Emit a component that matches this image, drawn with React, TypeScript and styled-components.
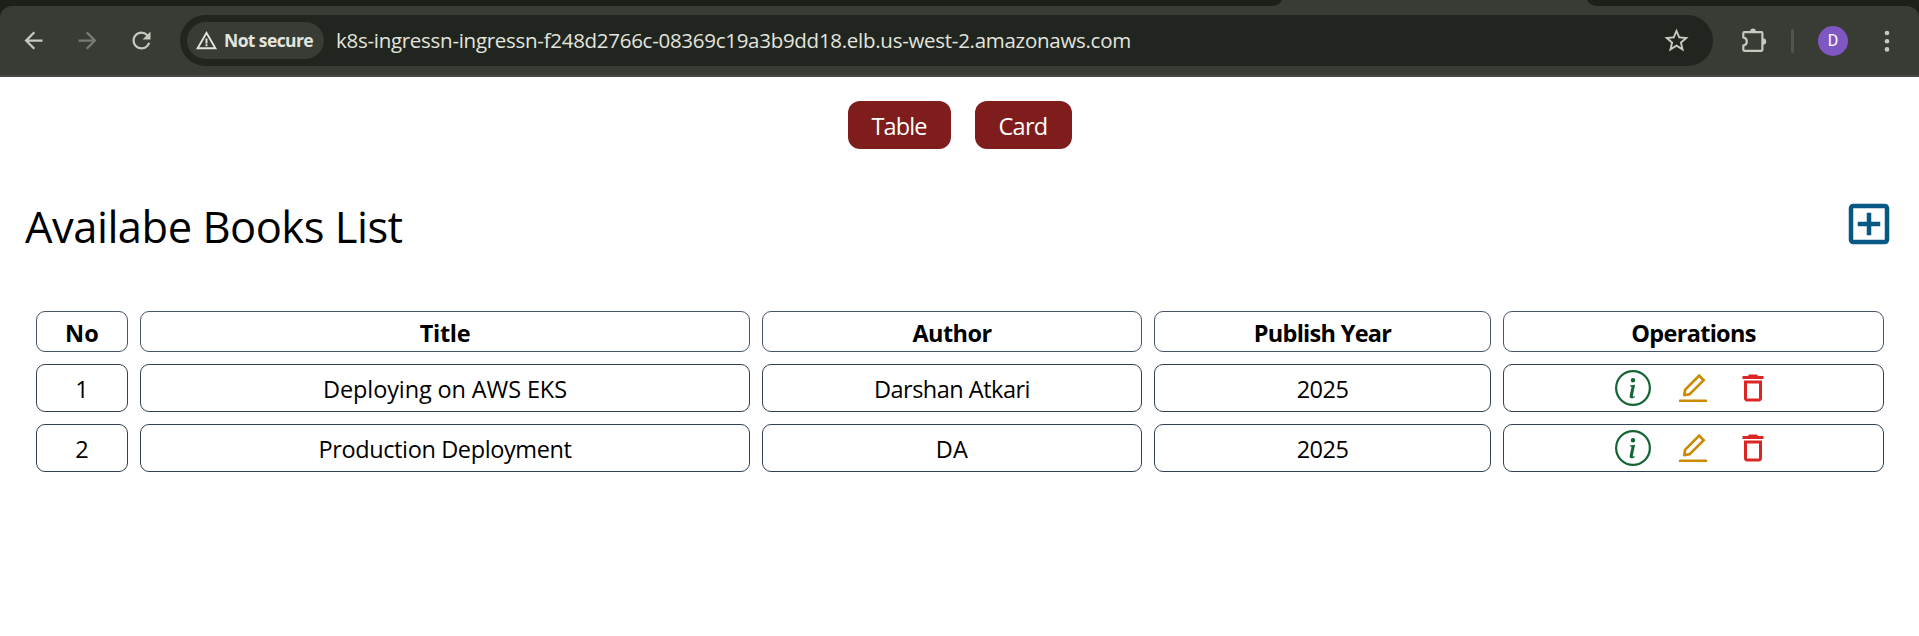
import React from "react";
import styled, { createGlobalStyle } from "styled-components";
import { BsInfoCircle } from "react-icons/bs";
import { AiOutlineEdit } from "react-icons/ai";
import {
  MdArrowBack,
  MdArrowForward,
  MdOutlineAddBox,
  MdOutlineDelete,
  MdRefresh,
  MdStarBorder,
  MdWarningAmber,
} from "react-icons/md";

const GlobalStyle = createGlobalStyle`
  *, *::before, *::after { box-sizing: border-box; }
  body {
    margin: 0;
    background: #ffffff;
    color: #000000;
    font-family: "Segoe UI", "Open Sans", "Noto Sans", sans-serif;
  }
  svg { display: block; flex: none; }
`;

/* ---------- browser chrome ---------- */

const TabStrip = styled.div`
  display: flex;
  height: 6px;
  padding-left: 1270px;
  background: #1c201b;
`;

const ToolbarFrame = styled.div`
  background: #1c201b;
`;

const Toolbar = styled.header`
  display: flex;
  align-items: center;
  height: 71px;
  padding: 0 0 0 6px;
  border-bottom: 2px solid #454843;
  border-radius: 12px 12px 0 0;
  background: #383c35;
  color: #c5cabf;
`;

const ToolButton = styled.span<{ $dim?: boolean }>`
  display: flex;
  align-items: center;
  justify-content: center;
  width: 54px;
  height: 51px;
  color: ${(p) => (p.$dim ? "#777b73" : "#c5cabf")};
`;

const AddressBar = styled.div`
  display: flex;
  align-items: center;
  width: 1533px;
  height: 51px;
  margin: 0 14px 0 12px;
  padding: 0 22px 0 7px;
  border-radius: 26px;
  background: #212520;
`;

const SecurityChip = styled.div`
  display: flex;
  align-items: center;
  gap: 6px;
  width: 137px;
  height: 37px;
  padding: 0 0 1px 8px;
  border-radius: 19px;
  background: #383c35;
  color: #e2e4dd;
  font-size: 17.5px;
  font-weight: 700;
  letter-spacing: -0.6px;
  white-space: nowrap;
`;

const Url = styled.span`
  flex: 1;
  padding: 0 0 2px 12px;
  color: #e2e4dd;
  font-size: 20.5px;
  letter-spacing: -0.28px;
  white-space: nowrap;
`;

const Separator = styled.span`
  width: 3px;
  height: 24px;
  margin: 0 24px 0 10px;
  border-radius: 2px;
  background: #50554d;
`;

const Avatar = styled.span`
  display: flex;
  align-items: center;
  justify-content: center;
  width: 30px;
  height: 30px;
  margin-right: 35px;
  border-radius: 50%;
  background: #7e57c2;
  color: #ffffff;
  font-family: Roboto, sans-serif;
  font-size: 16px;
`;

/* ---------- page ---------- */

const Page = styled.main`
  padding: 24px 23px 24px 24px;
`;

const ViewSwitch = styled.div`
  display: flex;
  justify-content: center;
  gap: 24px;
`;

const SwitchButton = styled.button<{ $width: number; $tracking: number }>`
  width: ${(p) => p.$width}px;
  height: 48px;
  padding: 1px 1px 0 0;
  border: 0;
  border-radius: 12px;
  background: #7f1d1d;
  color: #ffffff;
  font-family: inherit;
  font-size: 23.5px;
  letter-spacing: ${(p) => p.$tracking}px;
`;

const TitleRow = styled.div`
  display: flex;
  align-items: center;
  justify-content: space-between;
  height: 54px;
  margin: 48px 0;
`;

const Title = styled.h1`
  margin: 0;
  padding: 5px 0 0 1px;
  font-size: 43.5px;
  font-weight: 400;
  line-height: 50px;
  letter-spacing: -0.5px;
`;

const BookTable = styled.table`
  width: 1872px;
  table-layout: fixed;
  border-collapse: separate;
  border-spacing: 12px;
`;

const HeadCell = styled.th`
  height: 41px;
  padding: 3px 0 0;
  border: 1px solid #475569;
  border-radius: 9px;
  font-size: 23.5px;
  font-weight: 700;
  line-height: 32px;
`;

const Cell = styled.td`
  height: 48px;
  padding: 2px 0 0;
  border: 1px solid #334155;
  border-radius: 9px;
  font-size: 23.5px;
  line-height: 36px;
  text-align: center;
`;

const OperationsCell = styled(Cell)`
  padding: 0 2px 0 0;
`;

const Tracked = styled.span<{ $tracking: number }>`
  letter-spacing: ${(p) => p.$tracking}px;
`;

const Operations = styled.div`
  display: flex;
  justify-content: center;
  gap: 24px;
`;

const columns = [
  { label: "No", width: 92, tracking: 0.2 },
  { label: "Title", width: 610, tracking: -0.3 },
  { label: "Author", width: 380, tracking: -0.55 },
  { label: "Publish Year", width: 337, tracking: -0.7 },
  { label: "Operations", width: 381, tracking: -0.7 },
];

const books = [
  { title: "Deploying on AWS EKS", titleTracking: -0.12, author: "Darshan Atkari", authorTracking: -0.5, year: "2025" },
  { title: "Production Deployment", titleTracking: -0.38, author: "DA", authorTracking: 0.3, year: "2025" },
];

function ActiveTabFoot() {
  return (
    <svg width="329" height="6" viewBox="0 0 329 6">
      <path d="M0 6C6 6 10 4 12 0H317C319 4 323 6 329 6Z" fill="#383c35" />
    </svg>
  );
}

function PuzzleIcon() {
  return (
    <svg width="28" height="28" viewBox="0 0 28 28" fill="none">
      <path
        d="M4.3 5.2H21.4Q22.4 5.2 22.4 6.2V22.8Q22.4 23.8 21.4 23.8H4.3Q3.3 23.8 3.3 22.8V18.6C8 17.6 8 11.4 3.3 10.4V6.2Q3.3 5.2 4.3 5.2Z"
        stroke="#c5cabf"
        strokeWidth="2.2"
        strokeLinejoin="round"
      />
      <path d="M10 5A3 3.6 0 0 1 16 5ZM22.6 11.2A3.6 3.3 0 0 1 22.6 17.8Z" fill="#c5cabf" />
    </svg>
  );
}

function MenuDots() {
  return (
    <svg width="8" height="24" viewBox="0 0 8 24" fill="#c5cabf">
      <circle cx="4" cy="4" r="2.3" />
      <circle cx="4" cy="12.2" r="2.3" />
      <circle cx="4" cy="20.4" r="2.3" />
    </svg>
  );
}

function BrowserBar() {
  return (
    <>
      <TabStrip>
        <ActiveTabFoot />
      </TabStrip>
      <ToolbarFrame>
        <Toolbar>
          <ToolButton><MdArrowBack size={27} /></ToolButton>
          <ToolButton $dim><MdArrowForward size={27} /></ToolButton>
          <ToolButton><MdRefresh size={27} /></ToolButton>
          <AddressBar>
            <SecurityChip>
              <MdWarningAmber size={23} />
              Not secure
            </SecurityChip>
            <Url>k8s-ingressn-ingressn-f248d2766c-08369c19a3b9dd18.elb.us-west-2.amazonaws.com</Url>
            <MdStarBorder size={29} />
          </AddressBar>
          <ToolButton><PuzzleIcon /></ToolButton>
          <Separator />
          <Avatar>D</Avatar>
          <MenuDots />
        </Toolbar>
      </ToolbarFrame>
    </>
  );
}

export default function App() {
  return (
    <>
      <GlobalStyle />
      <BrowserBar />
      <Page>
        <ViewSwitch>
          <SwitchButton $width={103} $tracking={-0.9}>Table</SwitchButton>
          <SwitchButton $width={97} $tracking={-0.7}>Card</SwitchButton>
        </ViewSwitch>
        <TitleRow>
          <Title>Availabe Books List</Title>
          <MdOutlineAddBox size={54} color="#075985" />
        </TitleRow>
        <BookTable>
          <colgroup>
            {columns.map((c) => (
              <col key={c.label} width={c.width} />
            ))}
          </colgroup>
          <thead>
            <tr>
              {columns.map((c) => (
                <HeadCell key={c.label}>
                  <Tracked $tracking={c.tracking}>{c.label}</Tracked>
                </HeadCell>
              ))}
            </tr>
          </thead>
          <tbody>
            {books.map((b, i) => (
              <tr key={b.title}>
                <Cell>{i + 1}</Cell>
                <Cell><Tracked $tracking={b.titleTracking}>{b.title}</Tracked></Cell>
                <Cell><Tracked $tracking={b.authorTracking}>{b.author}</Tracked></Cell>
                <Cell><Tracked $tracking={-0.5}>{b.year}</Tracked></Cell>
                <OperationsCell>
                  <Operations>
                    <BsInfoCircle size={36} color="#166534" />
                    <AiOutlineEdit size={36} color="#ca8a04" />
                    <MdOutlineDelete size={36} color="#dc2626" />
                  </Operations>
                </OperationsCell>
              </tr>
            ))}
          </tbody>
        </BookTable>
      </Page>
    </>
  );
}
